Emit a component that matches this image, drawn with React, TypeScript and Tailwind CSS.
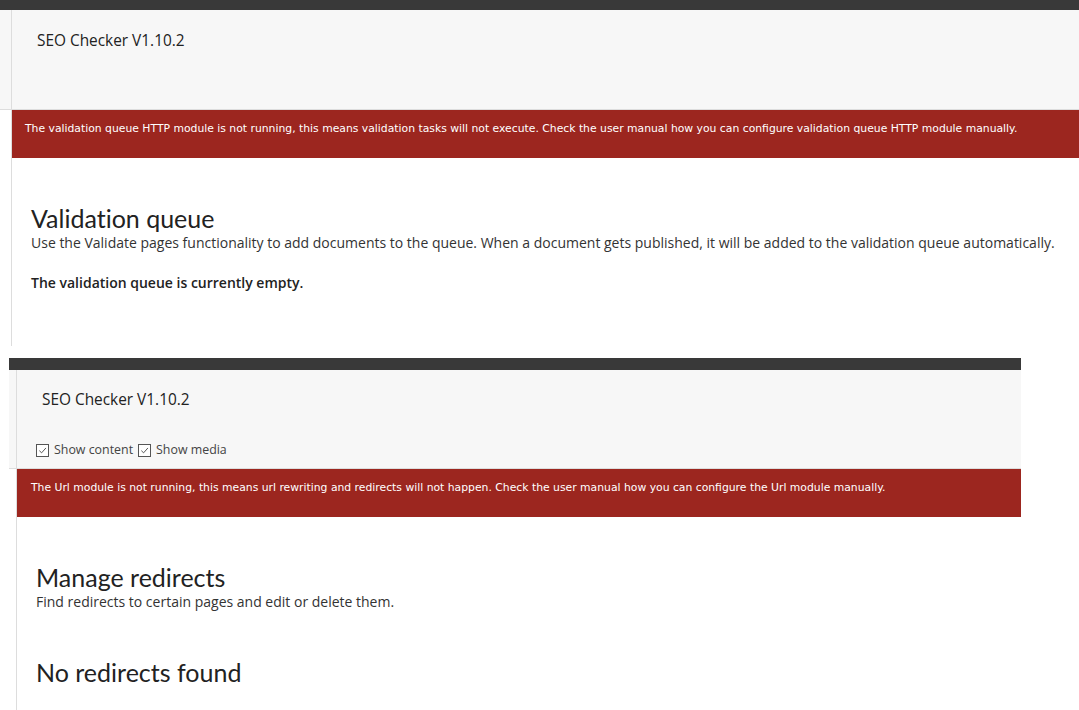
const heading = "font-['Lato','Liberation_Sans',sans-serif] [font-variant-ligatures:none]";
const body = "font-['Open_Sans','Noto_Sans',sans-serif]";
const alertFont = "font-['DejaVu_Sans','Liberation_Sans',sans-serif]";

const CheckBox = ({ label }: { label: string }) => (
  <label className="flex items-center gap-[5px]">
    <span className="flex h-[13px] w-[13px] items-center justify-center border border-[#555] bg-white">
      <svg viewBox="0 0 10 10" className="h-[9px] w-[9px]" fill="none" stroke="#444" strokeWidth="1">
        <path d="M1.5 5.2 L4 7.6 L8.8 2.2" />
      </svg>
    </span>
    <span>{label}</span>
  </label>
);

const Alert = ({ children, pad }: { children: React.ReactNode; pad: string }) => (
  <div className={`flex h-12 items-start bg-[#9c261f] pt-[11px] text-[10.8px] text-white ${alertFont} ${pad}`}>
    {children}
  </div>
);

export default function App() {
  return (
    <div className={`h-[710px] w-[1079px] overflow-hidden bg-white text-[#333] ${body}`}>
      {/* first panel */}
      <section className="w-[1079px]">
        <div className="h-[10px] bg-[#393939]" />
        <div className="h-[100px] border-b border-[#ddd] bg-[#f7f7f7] pl-[11px]">
          <div className="h-full border-l border-[#ddd] pl-[25px] pt-[19px] text-[15.4px] text-[#222]">
            SEO Checker V1.10.2
          </div>
        </div>
        <div className="pl-[11px]">
          <div className="border-l border-[#ddd]">
            <Alert pad="pl-[13px]">
              The validation queue HTTP module is not running, this means validation tasks will not execute. Check the user manual how you can configure validation queue HTTP module manually.
            </Alert>
            <div className="h-[188px] pl-[19px] pt-[45px]">
              <h2 className={`text-[25px] leading-[30px] text-[#222] ${heading}`}>Validation queue</h2>
              <p className="mt-px text-[14px] leading-[18px]">
                Use the Validate pages functionality to add documents to the queue. When a document gets published, it will be added to the validation queue automatically.
              </p>
              <p className="mt-[22px] text-[14px] font-semibold leading-[18px] text-[#222]">
                The validation queue is currently empty.
              </p>
            </div>
          </div>
        </div>
      </section>

      {/* second panel */}
      <section className="mt-[12px] ml-[9px] w-[1012px]">
        <div className="h-[12px] bg-[#393939]" />
        <div className="h-[99px] border-b border-[#ddd] bg-[#f7f7f7] pl-[7px]">
          <div className="flex h-full flex-col border-l border-[#ddd] pl-[25px] pt-[18px]">
            <div className="text-[15.4px] text-[#222]">SEO Checker V1.10.2</div>
            <div className="mt-[30px] -ml-[6px] flex items-center gap-[5px] text-[12.4px] text-[#444]">
              <CheckBox label="Show content" />
              <CheckBox label="Show media" />
            </div>
          </div>
        </div>
        <div className="pl-[7px]">
          <div className="border-l border-[#ddd]">
            <Alert pad="pl-[14px]">
              The Url module is not running, this means url rewriting and redirects will not happen. Check the user manual how you can configure the Url module manually.
            </Alert>
            <div className="h-[200px] pl-[19px] pt-[45px]">
              <h2 className={`text-[25px] leading-[30px] text-[#222] ${heading}`}>Manage redirects</h2>
              <p className="mt-px text-[14px] leading-[18px]">Find redirects to certain pages and edit or delete them.</p>
              <h2 className={`mt-[46px] text-[25px] leading-[30px] text-[#222] ${heading}`}>No redirects found</h2>
            </div>
          </div>
        </div>
      </section>
    </div>
  );
}
